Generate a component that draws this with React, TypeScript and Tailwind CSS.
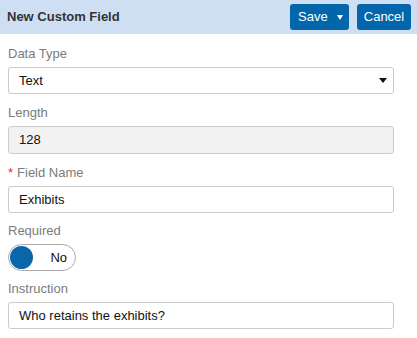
import React from "react";

const font = { fontFamily: '"Liberation Sans", Arial, sans-serif' };

function Label({ children, required }: { children: React.ReactNode; required?: boolean }) {
  return (
    <div className="h-[16px] leading-[16px] text-[13px] text-[#7b7b7b] mb-[5px]">
      {required && <span className="text-[#d9342b] mr-[4px]">*</span>}
      {children}
    </div>
  );
}

export default function App() {
  return (
    <div className="w-[417px] h-[338px] bg-white overflow-hidden" style={font}>
      <div className="h-[34px] bg-[#cfdff3] flex items-center justify-between pl-[7px] pr-[6px]">
        <div className="text-[13px] font-bold text-[#333]">New Custom Field</div>
        <div className="flex items-center gap-[8px]">
          <button className="h-[26px] w-[59px] rounded-[3px] bg-[#0466aa] text-white text-[13px] flex items-center pl-[8px]">
            <span>Save</span>
            <svg width="6" height="5" viewBox="0 0 6 5" className="ml-[9px] mt-[1px]">
              <path d="M0 0 L6 0 L3 5 Z" fill="white" />
            </svg>
          </button>
          <button className="h-[26px] w-[54px] rounded-[3px] bg-[#0466aa] text-white text-[13px] flex items-center justify-center">
            Cancel
          </button>
        </div>
      </div>

      <div className="pl-[8px] pr-[23px] pt-[12px] flex flex-col">
        <Label>Data Type</Label>
        <div className="h-[27px] border border-[#ccc] rounded-[3px] flex items-center justify-between pl-[10px] pr-[6px] text-[13px] text-[#111]">
          <span>Text</span>
          <svg width="8" height="5" viewBox="0 0 8 5">
            <path d="M0 0 L8 0 L4 5 Z" fill="#111" />
          </svg>
        </div>

        <div className="mt-[11px]">
          <Label>Length</Label>
          <div className="h-[28px] border border-[#ccc] rounded-[3px] bg-[#f2f2f2] flex items-center pl-[10px] text-[13px] text-[#111]">
            128
          </div>
        </div>

        <div className="mt-[11px]">
          <Label required>Field Name</Label>
          <div className="h-[27px] border border-[#ccc] rounded-[3px] flex items-center pl-[10px] text-[13px] text-[#111]">
            Exhibits
          </div>
        </div>

        <div className="mt-[10px]">
          <Label>Required</Label>
          <div className="w-[68px] h-[27px] border border-[#aaa] rounded-full flex items-center pl-[1px] pr-[8px] justify-between">
            <div className="w-[23px] h-[23px] rounded-full bg-[#0a66ab]" />
            <span className="text-[13px] text-[#111]">No</span>
          </div>
        </div>

        <div className="mt-[10px]">
          <Label>Instruction</Label>
          <div className="h-[27px] border border-[#ccc] rounded-[3px] flex items-center pl-[10px] text-[13px] text-[#111]">
            Who retains the exhibits?
          </div>
        </div>
      </div>
    </div>
  );
}
